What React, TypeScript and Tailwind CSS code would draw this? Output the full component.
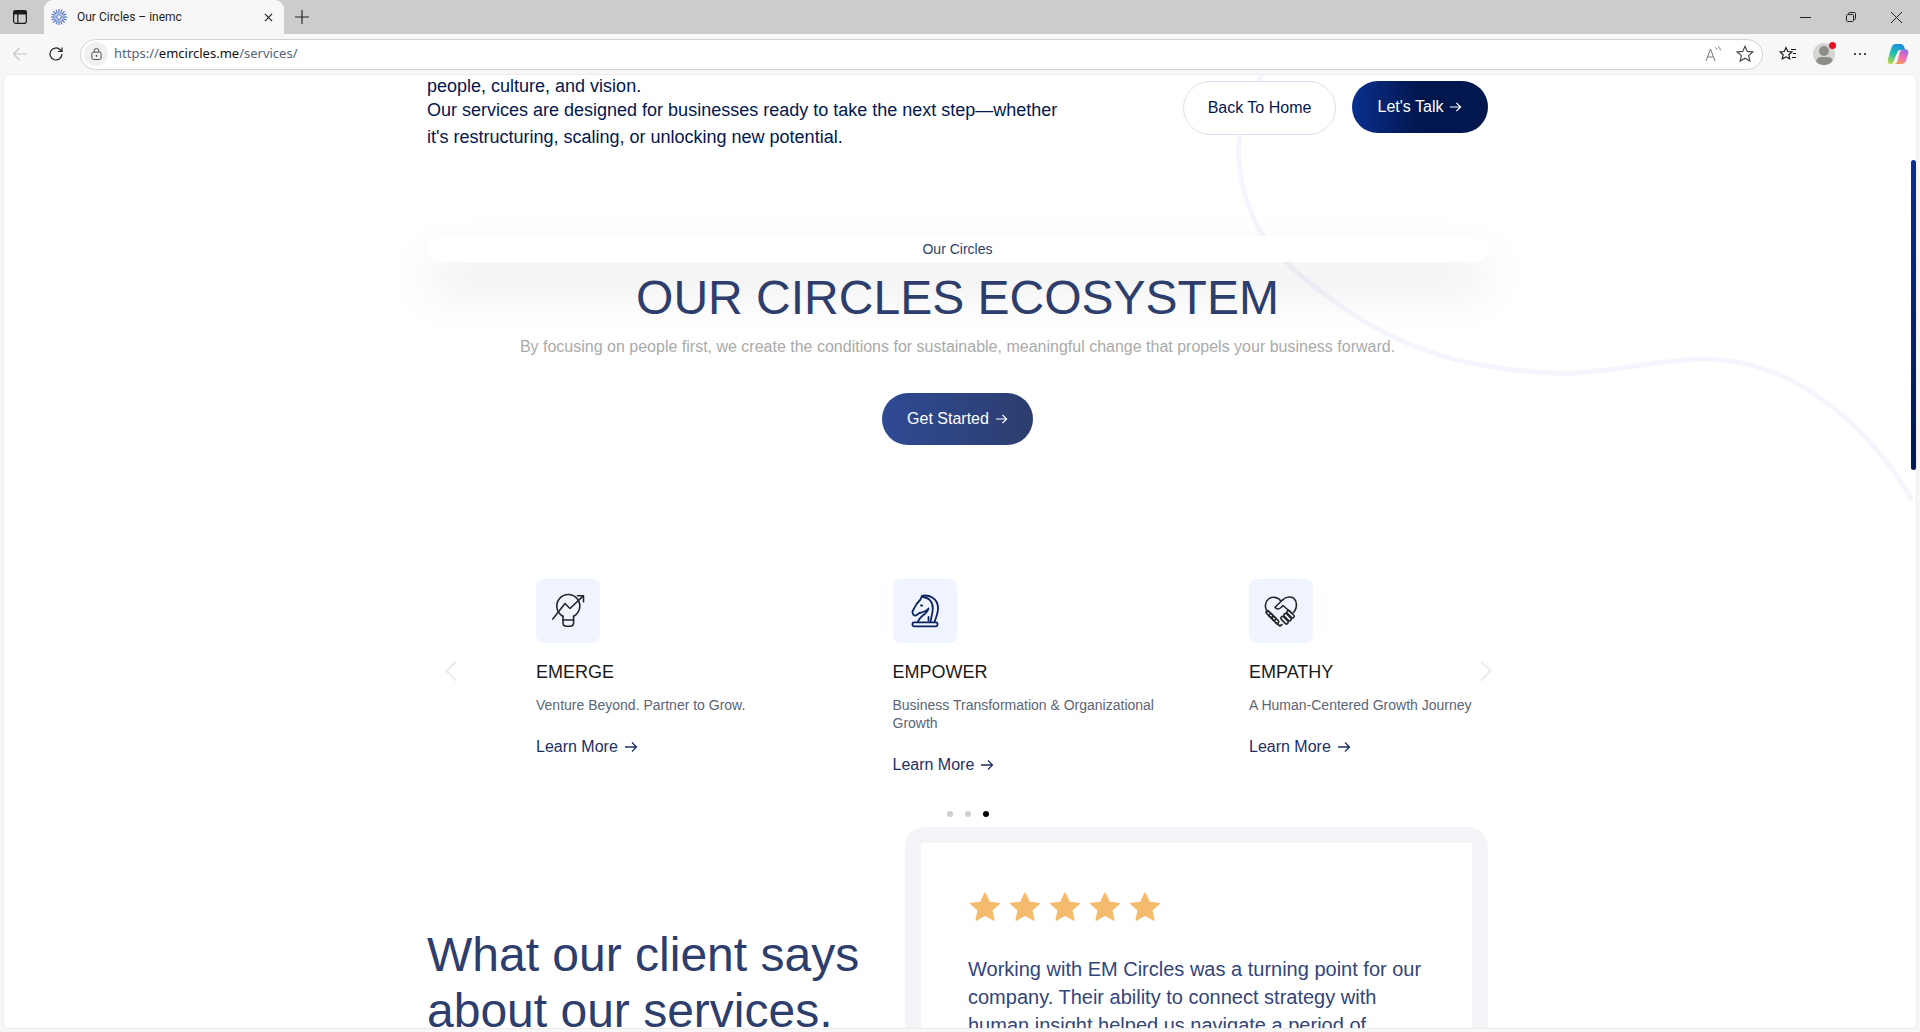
import { ChevronLeft, ChevronRight } from "lucide-react";

const services = [
  { title: "EMERGE", desc: "Venture Beyond. Partner to Grow.", icon: "bulb" },
  { title: "EMPOWER", desc: "Business Transformation & Organizational Growth", icon: "knight" },
  { title: "EMPATHY", desc: "A Human-Centered Growth Journey", icon: "heart" },
];

function Arrow({ className }: { className?: string }) {
  return (
    <svg viewBox="0 0 14 12" className={className} fill="none" stroke="currentColor" strokeWidth="1.3">
      <path d="M1 6h11.500M8 1.500 12.500 6 8 10.500" />
    </svg>
  );
}

function BulbIcon() {
  return (
    <svg viewBox="0 0 32 32" className="w-8 h-8 text-[#262626] overflow-visible" fill="none" stroke="currentColor" strokeWidth="1.6" strokeLinecap="round" strokeLinejoin="round">
      <path d="M11 21.200A11.500 11.500 0 1 1 21.600 21.200" />
      <path d="M11 21.200V25H21.600V21.200" />
      <path d="M11 25v2.500c0 2.200 1.500 3.700 3.500 3.700h3.600c2 0 3.500-1.500 3.500-3.700V25" />
      <path d="M.8 24 13 8.500 18 13.500 31 1.200" />
      <path d="M25.500.8H31.500V6.800" />
    </svg>
  );
}

function KnightIcon() {
  return (
    <svg viewBox="0 0 32 32" className="w-8 h-8 text-[#0b2260] overflow-visible" fill="none" stroke="currentColor" strokeWidth="1.8" strokeLinecap="round" strokeLinejoin="round">
      <path d="M9 27C10 21 19 19 19.500 13.500 17 16.500 13 17.500 10.500 18L7 20.500C5 21 3 19 3.500 16.500L5 13.500C6.500 10 9 7 11.500 4.500L13 .8C20-.5 29 3 29 13 29 18 27 23 25.500 27" />
      <path d="M14 2C20 2.500 24 7 23.800 13.500 23.700 18 22 23 21.500 27" />
      <path d="M12 10.500h1.200M19.500 22v3.500" />
      <rect x="3.500" y="27.300" width="25" height="4" rx="1.500" />
    </svg>
  );
}

function HeartIcon() {
  return (
    <svg viewBox="0 0 32 32" className="w-8 h-8 text-[#262626] overflow-visible" fill="none" stroke="currentColor" strokeWidth="1.6" strokeLinecap="round" strokeLinejoin="round">
      <path d="M16 6C13 2 7 1 3.500 4 0 7-.3 12 1.500 15L3 17" />
      <path d="M17.500 5C21 1.500 27 1 29.500 4 32 7 32 12 30 15.500L28.500 17.500" />
      <path d="M17.500 5 10 12.300C11.500 14.500 14 14.500 16 12.500L18 10.500 27 18.500" />
      <rect x="0.500" y="17.500" width="8" height="3.200" rx="1.600" transform="rotate(45 4.500 19)" />
      <rect x="3.500" y="20.500" width="8" height="3.200" rx="1.600" transform="rotate(45 7.500 22)" />
      <rect x="6.500" y="23.500" width="8" height="3.200" rx="1.600" transform="rotate(45 10.500 25)" />
      <path d="M11 28 15 31 17 29.500" />
      <rect x="21" y="17.500" width="9" height="3.400" rx="1.700" transform="rotate(45 25.500 19.200)" />
      <rect x="18" y="20.500" width="9" height="3.400" rx="1.700" transform="rotate(45 22.500 22.200)" />
      <rect x="15" y="23.500" width="9" height="3.400" rx="1.700" transform="rotate(45 19.500 25.200)" />
    </svg>
  );
}

function ServiceIcon({ name }: { name: string }) {
  if (name === "bulb") return <BulbIcon />;
  if (name === "knight") return <KnightIcon />;
  return <HeartIcon />;
}

function Star() {
  return (
    <svg viewBox="0 0 24 24" className="w-[32px] h-[32px] text-[#f4bb6e]" fill="currentColor" stroke="currentColor" strokeWidth="1" strokeLinejoin="round">
      <path d="M12 1.500l3.200 7 7.600.8-5.700 5.100 1.600 7.500-6.700-3.800-6.700 3.800 1.600-7.500L1.200 9.300l7.600-.8z" />
    </svg>
  );
}

function Favicon() {
  const spokes = Array.from({ length: 16 }, (_, i) => i * 22.5);
  return (
    <svg viewBox="0 0 16 16" className="w-4 h-4 shrink-0">
      {spokes.map((a) => (
        <line key={a} x1="8" y1="3.500" x2="8" y2="0" stroke="#4468bd" strokeWidth="1.100" transform={`rotate(${a} 8 8)`} />
      ))}
      {spokes.map((a) => (
        <line key={a} x1="8" y1="6.500" x2="8" y2="2.500" stroke="#7f9ad6" strokeWidth="0.900" transform={`rotate(${a + 11} 8 8)`} />
      ))}
    </svg>
  );
}

function TabStrip() {
  return (
    <div className="h-[34px] bg-[#cccccc] flex items-end shrink-0">
      <div className="w-[40px] h-[34px] flex items-center justify-center">
        <svg viewBox="0 0 14 14" className="w-[14px] h-[14px]" fill="none" stroke="#1a1a1a" strokeWidth="1.200">
          <rect x="0.600" y="0.600" width="12.800" height="12.800" rx="2.500" />
          <path d="M4.800 3.800v9.600" />
          <path d="M1 1h12v2.800H1z" fill="#1a1a1a" />
        </svg>
      </div>
      <div className="ml-[4px] w-[240px] h-[34px] bg-[#f7f7f7] rounded-t-[9px] flex items-center pl-[7px] pr-[11px]">
        <Favicon />
        <span className="ml-[10px] flex-1 text-[12px] text-[#1f1f1f] font-['Roboto',sans-serif]">Our Circles – inemc</span>
        <svg viewBox="0 0 10 10" className="w-[9px] h-[9px]" stroke="#222" strokeWidth="1.300"><path d="M1 1l8 8M9 1l-8 8" /></svg>
      </div>
      <div className="w-[36px] h-[34px] flex items-center justify-center">
        <svg viewBox="0 0 14 14" className="w-[14px] h-[14px]" stroke="#222" strokeWidth="1.100"><path d="M7 0v14M0 7h14" /></svg>
      </div>
      <div className="ml-auto flex h-[34px] items-center pr-[18px] gap-[35px]">
        <div className="w-[11px] h-px bg-[#222]" />
        <svg viewBox="0 0 10 10" className="w-[10px] h-[10px]" fill="none" stroke="#222" strokeWidth="1"><rect x="0.500" y="2.500" width="7" height="7" rx="1" /><path d="M2.500 2.500V1.500a1 1 0 0 1 1-1h5a1 1 0 0 1 1 1v5a1 1 0 0 1-1 1h-1" /></svg>
        <svg viewBox="0 0 10 10" className="w-[11px] h-[11px]" stroke="#222" strokeWidth="0.900"><path d="M0 0l10 10M10 0 0 10" /></svg>
      </div>
    </div>
  );
}

function Toolbar() {
  return (
    <div className="relative h-[40px] bg-[#f7f7f7] flex items-center shrink-0">
      <div className="w-[80px] flex items-center shrink-0">
        <svg viewBox="0 0 16 16" className="ml-[12px] w-4 h-4" fill="none" stroke="#c4c4c4" strokeWidth="1.200"><path d="M15 8H1.500M7.500 2 1.500 8l6 6" /></svg>
        <svg viewBox="0 0 16 16" className="ml-[20px] w-4 h-4" fill="none" stroke="#222" strokeWidth="1.200"><path d="M14 8a6 6 0 1 1-1.800-4.300L14 5.500M14 1.500v4h-4" /></svg>
      </div>
      <div className="w-[1683px] h-[31px] bg-white border border-[#d2d2d2] rounded-full flex items-center pl-[3px] pr-[8px] shrink-0">
        <div className="w-[24px] h-[24px] rounded-full bg-[#f0f0f0] flex items-center justify-center">
          <svg viewBox="0 0 12 13" className="w-[11px] h-[12px]" fill="none" stroke="#444" strokeWidth="1"><rect x="1" y="4.500" width="10" height="8" rx="1.500" /><path d="M3.500 4.500V3a2.500 2.500 0 0 1 5 0v1.500" /><circle cx="6" cy="8.500" r=".6" fill="#444" /></svg>
        </div>
        <span className="ml-[6px] text-[13px] text-[#54657a] font-['Noto_Sans',sans-serif]">
          https://<span className="text-[#111]">emcircles.me</span>/services/
        </span>
        <div className="ml-auto flex items-center gap-[15px]">
          <svg viewBox="0 0 16 16" className="w-4 h-4" fill="none" stroke="#777" strokeWidth="1">
            <path d="M1 15 5.500 3 10 15M2.800 11h5.400M10.500 1.500c1 .6 1.500 1.500 1.500 2.500M13 .5c1.500 1 2.300 2.400 2.300 4" />
          </svg>
          <svg viewBox="0 0 16 16" className="w-[18px] h-[18px]" fill="none" stroke="#444" strokeWidth="1"><path d="M8 1.200l2 4.500 4.900.5-3.700 3.300 1.100 4.800L8 11.800l-4.300 2.500 1.100-4.800L1.100 6.200 6 5.700z" /></svg>
        </div>
      </div>
      <div className="flex items-center ml-[16px]">
        <svg viewBox="0 0 18 16" className="w-[18px] h-[16px]" fill="none" stroke="#111" strokeWidth="1.100"><path d="M7 1.500l1.800 4 4.200.4-3.200 2.900 1 4.200L7 10.800l-3.800 2.200 1-4.200L1 5.900l4.200-.4zM12 3.500h5M14 7.500h3M13 11.500h4" /></svg>
        <div className="ml-[16px] w-[22px] h-[22px] rounded-full bg-[#d7d5d2] overflow-hidden flex flex-col items-center">
          <div className="w-[10px] h-[10px] rounded-full bg-[#8f8d8a] mt-[3px] shrink-0" />
          <div className="w-[17px] h-[10px] rounded-full bg-[#8f8d8a] mt-[1px] shrink-0" />
        </div>
        <div className="ml-[19px] flex gap-[3px]">
          <div className="w-[2px] h-[2px] rounded-full bg-[#111]" />
          <div className="w-[2px] h-[2px] rounded-full bg-[#111]" />
          <div className="w-[2px] h-[2px] rounded-full bg-[#111]" />
        </div>
        <svg viewBox="0 0 22 22" className="ml-[21px] w-[22px] h-[22px]">
          <defs>
            <linearGradient id="cp1" x1="0.600" y1="0" x2="0.200" y2="1">
              <stop offset="0" stopColor="#1a8fe3" />
              <stop offset="0.500" stopColor="#20c0b0" />
              <stop offset="1" stopColor="#b7d84a" />
            </linearGradient>
            <linearGradient id="cp2" x1="0.800" y1="0" x2="0.200" y2="1">
              <stop offset="0" stopColor="#9a6be8" />
              <stop offset="0.500" stopColor="#ef6fb4" />
              <stop offset="1" stopColor="#f6a04d" />
            </linearGradient>
          </defs>
          <path d="M8.500 1h5c1.500 0 2.700.7 3.300 2l1.500 4h-5c-1.500 0-2.500.8-3 2.300L7 17.500c-.5 2-1.500 3.500-3.500 3.500C1.500 21 .5 19.500.8 17.500c.7-3.500 1.800-7.500 3-11C4.800 3 6 1 8.500 1z" fill="url(#cp1)" />
          <path d="M18.500 6.500C20.500 6.500 21.800 8 21.400 10L19 17.500C18.200 20 16.500 21 14 21H7C9 21 10 19.500 10.500 17.500L12.500 10C13 8 14.500 6.500 16.500 6.500z" fill="url(#cp2)" />
        </svg>
      </div>
      {/* red profile notification dot */}
      <div className="absolute left-[1829px] top-[8px] w-[7px] h-[7px] rounded-full bg-[#e81123]" />
    </div>
  );
}

export default function App() {
  return (
    <div className="w-[1920px] h-[1032px] bg-[#f7f7f7] flex flex-col overflow-hidden font-['Liberation_Sans',Arial,sans-serif]">
      <TabStrip />
      <Toolbar />

      <div className="relative flex-1 mx-[3px] mb-[3px] bg-white rounded-t-[6px] rounded-b-[4px] overflow-hidden border border-[#ececec]">
        {/* decorative curve */}
        <svg viewBox="0 0 1912 955" className="absolute left-0 top-0 w-[1912px] h-[955px]" fill="none" stroke="#f5f6fd" strokeWidth="5">
          <path d="M1258 0C1240 30 1233 60 1235 86 1237 112 1245 136 1256 156 1280 190 1305 208 1334 229 1380 262 1425 280 1471 289 1510 296 1540 299 1572 298 1620 295 1660 284 1701 284 1745 285 1785 300 1816 323 1855 350 1885 385 1908 425" />
        </svg>

        {/* scrollbar thumb */}
        <div className="absolute right-0 top-[85px] w-[5px] h-[310px] rounded-full bg-gradient-to-b from-[#0a2f8f] to-[#03174f] z-20" />

        <div className="relative ml-[423px] w-[1061px]">
          {/* Intro */}
          <div className="flex justify-between">
            <div className="w-[640px] text-[18px] text-[#03174f]">
              <p className="leading-[22px]">people, culture, and vision.</p>
              <p className="leading-[27px]">
                Our services are designed for businesses ready to take the next step—whether
                <br />
                it's restructuring, scaling, or unlocking new potential.
              </p>
            </div>
            <div className="flex gap-[16px] items-start mt-[6px]">
              <button className="w-[153px] h-[54px] rounded-[27px] border border-[#dedfee] bg-white text-[16px] text-[#03174f]">Back To Home</button>
              <button className="w-[136px] h-[52px] rounded-[26px] bg-gradient-to-r from-[#0a2f8f] to-[#03174f] via-[#03174f] text-[16px] text-white flex items-center justify-center gap-[6px]">
                Let's Talk <Arrow className="w-[13px] h-[12px]" />
              </button>
            </div>
          </div>

          {/* Heading */}
          <div className="mt-[85px] h-[26px] rounded-[13px] bg-white shadow-[0_26px_50px_rgba(0,0,0,0.1)] flex items-center justify-center text-[14px] text-[#2d3e6d]">Our Circles</div>
          <h1 className="mt-[7px] text-center text-[48px] leading-[58px] text-[#2d3e6d] font-normal relative">OUR CIRCLES ECOSYSTEM</h1>
          <p className="mt-[8px] text-center text-[16px] leading-[24px] text-[#aaaaaa] relative">
            By focusing on people first, we create the conditions for sustainable, meaningful change that propels your business forward.
          </p>
          <div className="flex justify-center mt-[34px]">
            <button className="w-[151px] h-[52px] rounded-[26px] bg-gradient-to-r from-[#2f4a94] to-[#2c3e6e] text-[16px] text-white flex items-center justify-center gap-[6px]">
              Get Started <Arrow className="w-[13px] h-[12px]" />
            </button>
          </div>

          {/* Services carousel */}
          <div className="relative mt-[134px] h-[239px]">
            <ChevronLeft className="absolute left-[6px] top-[74px] w-9 h-9 text-[#ececec]" strokeWidth={1.5} />
            <ChevronRight className="absolute left-[1041px] top-[74px] w-9 h-9 text-[#ececec]" strokeWidth={1.5} />
            <div className="ml-[109px] flex gap-[79.5px]">
              {services.map((s) => (
                <div key={s.title} className="w-[277px] shrink-0">
                  <div className="w-[64px] h-[64px] rounded-[8px] bg-[#f0f4fe] flex items-center justify-center">
                    <ServiceIcon name={s.icon} />
                  </div>
                  <h3 className="mt-[17px] text-[18px] leading-[24px] text-[#1a1a1a] font-normal">{s.title}</h3>
                  <p className="mt-[12px] text-[14px] leading-[18px] text-[#5b6579]">{s.desc}</p>
                  <a className="mt-[21px] flex items-center gap-[6px] text-[16px] leading-[24px] text-[#1e2f66]">
                    Learn More <Arrow className="w-[14px] h-[12px]" />
                  </a>
                </div>
              ))}
            </div>
          </div>

          {/* Dots */}
          <div className="ml-[520px] mt-[-7px] flex gap-[12px]">
            <div className="w-[6px] h-[6px] rounded-full bg-[#cfcfcf]" />
            <div className="w-[6px] h-[6px] rounded-full bg-[#cfcfcf]" />
            <div className="w-[6px] h-[6px] rounded-full bg-black" />
          </div>

          {/* Testimonials */}
          <div className="mt-[10px] flex justify-between">
            <h2 className="mt-[100px] w-[460px] text-[48px] leading-[56px] text-[#2d3e6d] font-normal">What our client says about our services.</h2>
            <div className="w-[583px] rounded-t-[20px] bg-[#f3f4f8] px-[16px] pt-[16px]">
              <div className="bg-white px-[47px] pt-[48px] pb-[40px]">
                <div className="flex gap-[8px] ml-[1px]">
                  <Star />
                  <Star />
                  <Star />
                  <Star />
                  <Star />
                </div>
                <p className="mt-[32px] text-[20px] leading-[28px] text-[#33457a]">
                  Working with EM Circles was a turning point for our company. Their ability to connect strategy with human insight helped us navigate a period of
                </p>
              </div>
            </div>
          </div>
        </div>
      </div>
    </div>
  );
}
